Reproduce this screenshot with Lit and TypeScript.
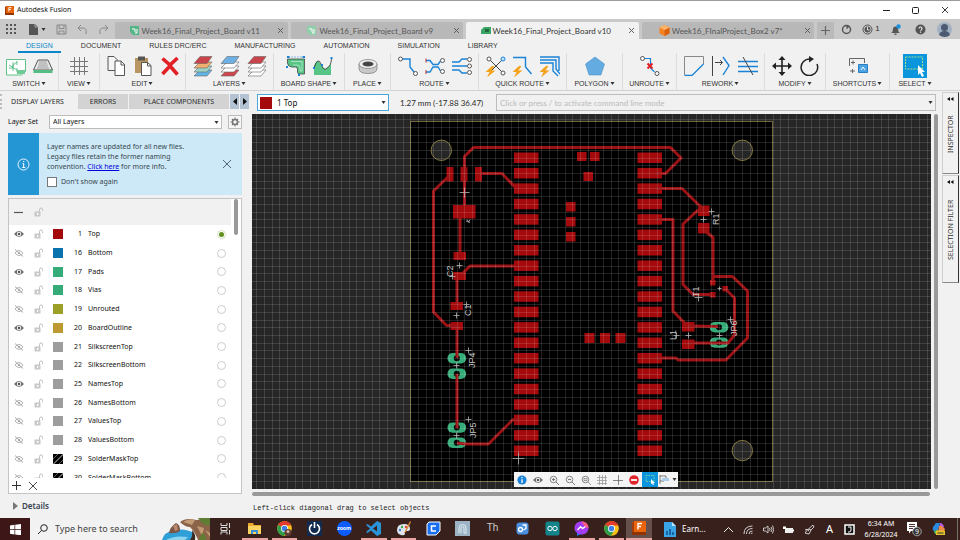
import { LitElement, html, svg, css } from "lit";
import { customElement, state } from "lit/decorators.js";
import { classMap } from "lit/directives/class-map.js";
import { styleMap } from "lit/directives/style-map.js";

/* ---------- board drawing ---------- */

type Rect = [number, number, number, number];
const VIEW = { x: 252, y: 114, w: 679, h: 375 };
const PITCH = 7.71;

const range = (n: number) => Array.from({ length: n }, (_, i) => i);
const gridLines = (origin: number, from: number, to: number) => {
  const first = Math.ceil((from - origin) / PITCH);
  const last = Math.floor((to - origin) / PITCH);
  return range(last - first + 1).map((i) => Math.floor(origin + (first + i) * PITCH) + 0.5);
};

const headerPads: Rect[] = range(20).flatMap((i) => [
  [514, 152.5 + i * 15.42, 24.5, 10.5] as Rect,
  [637.5, 152.5 + i * 15.42, 24.5, 10.5] as Rect,
]);

const smdPads: Rect[] = [
  [446.5, 167, 7, 14.5], [460.5, 167, 7, 14.5], [475, 167, 7, 14.5],
  [453, 205, 22.5, 13.5],
  [453.5, 252, 12.5, 8], [453.5, 272, 12.5, 8],
  [450.5, 302, 12.5, 8], [450.5, 322, 12.5, 8],
  [577, 152, 9.5, 9], [590, 152, 9.5, 9], [583.5, 172, 9.5, 9],
  [566, 202, 9.5, 9.5], [566, 217, 9.5, 9.5], [566, 232, 9.5, 9.5],
  [584.5, 333, 10, 10], [600, 333, 10, 10], [615.5, 333, 10, 10],
  [698, 205.5, 11.5, 10.5], [698, 223, 11.5, 10.5],
  [710, 280, 5.5, 5.5], [710, 292, 5.5, 5.5], [722.5, 286, 5.5, 5.5],
  [682, 322, 12.5, 9.5], [682, 339.5, 12.5, 9.5],
];

const throughPads: [number, number][] = [
  [456.8, 358.2], [456.8, 373.8], [456.8, 427.6], [456.8, 442.8],
  [719, 327.2], [719, 342.6],
];

const traces = [
  "464.5,206 464.5,156.5 473.5,147.5 670.5,147.5 681,158 665.5,173.5 655,173.5",
  "450,175 433.5,191 433.5,312 446.5,325.5 456,325.5",
  "479,173.5 502,173.5 515,187",
  "460,216 460,254",
  "461,275 470,266 516,266",
  "457,278 457,304",
  "457,327 457,358",
  "457,374 457,428",
  "457,443 466,444 488.5,444 513,419.5 520,419.5",
  "655,188.5 682,188.5 703,209",
  "703,209 697,211 683,224 683,284.5 693,294.5 712,294.5",
  "704,230 713,237.5 713,282",
  "713,276.5 732.5,276.5 747.5,291 747.5,338 726,360 678,360 676,358 655,358",
  "725,288.5 734.5,298 734.5,335 728,343 688,343",
  "655,219.5 673,219.5 673,311 687,325.5",
  "688,326 718,326.5",
];

const names: [string, number, number][] = [
  ["C2", 453, 277], ["C1", 471, 316], ["JP4", 475, 368], ["JP5", 476, 438],
  ["R1", 719, 225], ["T1", 699, 297], ["L1", 676, 340], ["JP6", 737, 336],
];

const crosses: [number, number, number][] = [
  [464.5, 192.5, 5], [459.5, 265.5, 3], [452.5, 276.5, 3], [456.5, 315.5, 3],
  [466.5, 304.5, 3], [456.5, 365.5, 3], [468.5, 350.5, 3], [456.5, 435.5, 3],
  [468.5, 419.5, 3], [518.5, 458.5, 6], [711.5, 211.5, 3], [703.5, 219.5, 3],
  [719.5, 288.5, 2], [698.5, 297.5, 4], [676.5, 335.5, 3], [688.5, 335.5, 3],
  [719.5, 335.5, 3], [730.5, 319.5, 3],
];

@customElement("pcb-canvas")
export class PcbCanvas extends LitElement {
  static styles = css`
    :host { display: block; min-width: 0; min-height: 0; background: #262626; overflow: hidden; }
    svg { display: block; width: 100%; height: 100%; }
    .board { fill: #000; stroke: #6e6334; }
    .hole { fill: #262626; stroke: #83763a; }
    .copper { fill: #a40a0c; }
    .trace { fill: none; stroke: #9c1214; stroke-width: 3; stroke-linejoin: round; }
    .pad { fill: #34ab78; }
    .drill { fill: #000; }
    .grid { stroke: #fff; stroke-opacity: 0.13; fill: none; }
    .cross { stroke: #b5b5b5; fill: none; stroke-width: 0.8; }
    .name { fill: #c8c8c8; font: 9px "Liberation Sans", sans-serif; }
  `;

  render() {
    const xs = gridLines(788.6, VIEW.x, VIEW.x + VIEW.w);
    const ys = gridLines(119.6, VIEW.y, VIEW.y + VIEW.h);
    const grid =
      xs.map((x) => `M${x} ${VIEW.y}V${VIEW.y + VIEW.h}`).join("") +
      ys.map((y) => `M${VIEW.x} ${y}H${VIEW.x + VIEW.w}`).join("");
    return html`<svg viewBox="${VIEW.x} ${VIEW.y} ${VIEW.w} ${VIEW.h}"
      preserveAspectRatio="xMidYMid slice" role="img" aria-label="Board layout">
      <rect class="board" x="410.5" y="121.5" width="362" height="360"></rect>
      ${[[441.3, 150.3], [742.3, 150.3], [742.3, 450.6]].map(
        ([x, y]) => svg`<circle class="hole" cx=${x} cy=${y} r="10.2"/>`)}
      ${headerPads.concat(smdPads).map(
        ([x, y, w, h]) => svg`<rect class="copper" x=${x} y=${y} width=${w} height=${h}/>`)}
      ${throughPads.map(([x, y]) => svg`<rect class="pad" x=${x - 9.3} y=${y - 5.2} width="18.6" height="10.4" rx="5"/>
        <circle class="drill" cx=${x} cy=${y} r="3"/>`)}
      ${traces.map((p) => svg`<polyline class="trace" points=${p}/>`)}
      <path class="grid" d=${grid}></path>
      ${crosses.map(([x, y, r]) => svg`<path class="cross" d="M${x - r} ${y}h${2 * r}M${x} ${y - r}v${2 * r}"/>`)}
      <path class="cross" d="M466 221l4 1.500M467 219.500l2 3M470 219.500l-1 2"></path>
      ${names.map(([t, x, y]) => svg`<text class="name" transform="translate(${x} ${y}) rotate(-90)">${t}</text>`)}
    </svg>`;
  }
}

/* ---------- icons ---------- */

const ic = (body: unknown, w = 20, h = w) =>
  html`<svg width=${w} height=${h} viewBox="0 0 ${w} ${h}" fill="none" aria-hidden="true">${body}</svg>`;

const caret = ic(svg`<path d="M.5 1h4l-2 3z" fill="#333"/>`, 5);
const cross = (s: number, c: string) => ic(svg`<path d="M1 1L${s - 1} ${s - 1}M${s - 1} 1L1 ${s - 1}" stroke=${c} stroke-width="0.9"/>`, s);
const sheets = (top: string, mid: string, low: string, lowest: string) =>
  ic(svg`<g stroke="#666" stroke-width=".6">
    <path d="M1 20l6-6h12l-5 6z" fill=${lowest}/><path d="M1 16l6-6h12l-5 6z" fill=${low}/>
    <path d="M1 12l6-6h12l-5 6z" fill=${mid}/><path d="M1 7.500l6-7h12l-5 7z" fill=${top}/></g>`, 20, 21);
const bolt = svg`<path d="M6 10L-.5 16H3.500L1 21.500 9.500 14.500H5.500L8.500 10z" fill="#f5a21c"/>`;

const I = {
  schematic: ic(svg`<path d="M.5 3.500h19v12l-4 3.500H.5z" fill="#fff" stroke="#5fc389"/><path d="M3 12h4V6m0 9V9l4-3M3 9l8 5M11 5v4m0 3v4" stroke="#3fb573" stroke-width=".8"/><path d="M11 14h8v4h-8z" fill="#6fca95"/>`),
  board3d: ic(svg`<path d="M5 4h10l4.500 10H.5z" fill="#e8e8e8" stroke="#555"/><path d="M.5 14h19v3H.5z" fill="#55bd83"/><path d="M4 12h12M5 10h10M5.500 8h9M6 6h8" stroke="#999"/>`),
  grid: ic(svg`<path d="M5.500 1v18M10.500 1v18M15.500 1v18M1 5.500h18M1 10.500h18M1 15.500h18" stroke="#777"/>`),
  copy: ic(svg`<path d="M2 .5h6l3 3v11H2z" fill="#f5f5f5" stroke="#555"/><path d="M9 5h6l3.500 3.500V19.500H9z" fill="#fff" stroke="#555"/><path d="M15 5v4h4" stroke="#555"/>`),
  paste: ic(svg`<path d="M2 2h13v15H2z" fill="#b99562"/><path d="M5 .5h7v4H5z" fill="#555"/><path d="M8.500 6.500h6l3.500 3v10H8.500z" fill="#fff" stroke="#555"/><path d="M14.500 6.500v3.500H18" stroke="#555"/>`),
  del: ic(svg`<path d="M2.500 2.500L10 9l7.500-7M2.500 18L10 10l7.500 8.500" stroke="#e32026" stroke-width="3.600"/>`),
  layersA: sheets("#c9434a", "#f0b070", "#9bd4c8", "#63b4e6"),
  layersB: sheets("#6cb0e4", "#fff", "#fff", "#d0474d"),
  layersC: sheets("#c9434a", "#fff", "#fff", "#fff"),
  shapeA: ic(svg`<path d="M1.500 3h17v15H13.500q-2 0-2-2v-3q0-2-2-2h-4q-4-1-4-4z" fill="#58c587" stroke="#333" stroke-width=".7"/><path d="M5 5.500h11V15h-2v-3q0-3-3-3H7" stroke="#a9e2c0"/><path d="M2.500 1h15" stroke="#1a83d8" stroke-dasharray="1 2"/><path d="M1 0h2.500v2H1zM16.500 0H19v2h-2.500zM0 10h2v2H0zM12 18h2v2h-2z" fill="#1a83d8"/>`),
  shapeB: ic(svg`<path d="M1 19V10q3-8 6-3t5 6q4-1 6-6v12z" fill="#58c587"/><path d="M1 12Q5 0 8 8t6 4q4-2 4.500-9" stroke="#333" stroke-width=".8"/><path d="M17.500 1h2v2h-2zM0 11h2v2H0zM8 8h2v2H8z" fill="#1a83d8"/>`),
  place: ic(svg`<path d="M1 8v4.500q0 5 9 5t9-5V8z" fill="#c9c9c9" stroke="#777" stroke-width=".7"/><ellipse cx="10" cy="8" rx="9" ry="4.500" fill="#eee" stroke="#777" stroke-width=".7"/><ellipse cx="10" cy="8" rx="5.500" ry="2.500" fill="#444"/>`),
  route: ic(svg`<path d="M4 3h8v8l4 5" stroke="#1a83d8" stroke-width="1.400"/><circle cx="2.500" cy="3" r="2" fill="#fff" stroke="#555"/><circle cx="17.500" cy="17.500" r="2" fill="#fff" stroke="#555"/>`),
  routeMulti: ic(svg`<path d="M1 4.500h4l3 4h5l2.500-3.500M1 16h4l3-5h5l2.500 4" stroke="#1a83d8" stroke-width="1.400"/><path d="M1 2.500v4M1 14v4" stroke="#b33"/><circle cx="17.500" cy="4.500" r="2" fill="#fff" stroke="#555"/><circle cx="17.500" cy="15.500" r="2" fill="#fff" stroke="#555"/>`),
  routeBus: ic(svg`<path d="M0 6h7l3-3h5M0 10h15M0 14h7l3 3h5" stroke="#1a83d8" stroke-width="1.400"/><circle cx="17.500" cy="3.500" r="2" fill="#fff" stroke="#555"/><circle cx="17.500" cy="10" r="2" fill="#fff" stroke="#555"/><circle cx="17.500" cy="16.500" r="2" fill="#fff" stroke="#555"/>`),
  quickA: ic(svg`<path d="M4 4l12 12M4 16L16 4" stroke="#444"/><circle cx="3" cy="3" r="2" fill="#fff" stroke="#555"/><circle cx="17" cy="3" r="2" fill="#bfe0f8" stroke="#1a83d8"/><circle cx="17" cy="17" r="2" fill="#fff" stroke="#555"/>${bolt}`, 20, 21),
  quickB: ic(svg`<path d="M0 1.500h12.500V11l6 7" stroke="#1a83d8" stroke-width="1.400"/>${bolt}`, 20, 21),
  quickC: ic(svg`<path d="M0 1h19v14M0 4h16v9l4 5M0 7h13v8l5 5" stroke="#1a83d8" stroke-width="1.400"/>${bolt}`, 20, 21),
  polygon: ic(svg`<path d="M10 1l9.500 7-3.600 11H4.100L.5 8z" fill="#64abe2" stroke="#4a90c8" stroke-width=".6"/>`),
  unroute: ic(svg`<path d="M4 2.500h6.500V12l4 4" stroke="#1a83d8" stroke-width="1.200"/><circle cx="2.500" cy="2.500" r="2" fill="#fff" stroke="#555"/><circle cx="17" cy="17.500" r="2" fill="#fff" stroke="#555"/><path d="M7.500 7.500l5 5m0-5l-5 5" stroke="#e32026" stroke-width="2"/>`),
  reworkA: ic(svg`<path d="M.5 19V.5h19V8" stroke="#888"/><path d="M.5 19.500H8L19.500 8" stroke="#1a83d8" stroke-width="1.300"/>`),
  reworkB: ic(svg`<path d="M1.500 0v20M4 6.500h7.500M9 4l2.500 2.500L9 9" stroke="#444"/><path d="M12 1l6 8.500L12 19" stroke="#1a83d8" stroke-width="1.400"/>`),
  reworkC: ic(svg`<path d="M0 5.500h20M0 10.500h20M0 15.500h20" stroke="#1a83d8" stroke-width="1.400"/><path d="M5 1l10 18" stroke="#444"/>`),
  move: ic(svg`<path d="M10 2v16M2 10h16" stroke="#222" stroke-width="1.600"/><path d="M10 0l3.500 4h-7zM10 20l3.500-4h-7zM0 10l4-3.500v7zM20 10l-4-3.500v7z" fill="#222"/>`),
  rotate: ic(svg`<path d="M18 8a8.300 8.300 0 1 1-7-5" stroke="#222" stroke-width="1.500"/><path d="M10 0l5 3-5 3.500z" fill="#222"/>`),
  shortcuts: ic(svg`<path d="M1.500 10V2.500h15V7M3 6.500h4M5 4.500v4M2 15h5M4.500 13v4" stroke="#666"/><path d="M10.500 8.500h9v8h-9z" fill="#4aa3e4" stroke="#2b7fc0"/><path d="M13 14l2-3 2 3" stroke="#fff"/>`),
  select: ic(svg`<path d="M0 0h24v24H0z" fill="#0b95dc"/><path d="M2.500 3h17v12h-17z" stroke="#9fe08a" stroke-dasharray="2 1"/><path d="M15 11l7 7h-3l2 4-2 1-2-4-2 2z" fill="#fff"/>`, 24),
};

const eye = ic(svg`<path d="M0 5q5-6 10 0-5 6-10 0z" fill="#6e6e6e"/><circle cx="5" cy="5" r="2.200" fill="#fff"/><circle cx="5" cy="5" r="1.300" fill="#555"/>`, 10);
const eyeOff = ic(svg`<path d="M1 5q4-5 8 0-4 5-8 0z" stroke="#b5b5b5"/><circle cx="5" cy="5" r="1.200" fill="#b5b5b5"/><path d="M1 1.500l8 7" stroke="#a5a5a5"/>`, 10);
const lock = ic(svg`<path d="M.5 4.500h6v5h-6z" fill="#c9c9c9"/><path d="M5.500 5V2.500q0-1.500 1.500-1.500t1.500 1.500V4" stroke="#c0c0c0"/><path d="M3 6h1.300v2H3z" fill="#fff"/>`, 10);
const pcbIcon = (c: string) => ic(svg`<path d="M1 1h9v9H4L1 7z" fill=${c}/><path d="M3 4h3v3M6 8h2V4" stroke="#fff"/>`, 11);
const boxIcon = ic(svg`<path d="M5.500 0l5 2.500v6l-5 2.500-5-2.500v-6z" fill="#f58220"/><path d="M5.500 5l5-2.500v6l-5 2.500z" fill="#d9610d"/><path d="M.5 2.500L5.500 0l5 2.500-5 2.500z" fill="#fbb26a"/>`, 11);
const chrome = ic(svg`<circle cx="7.500" cy="7.500" r="7.300" fill="#fbc116"/><path d="M7.500 7.500L1.200 3.900A7.300 7.300 0 0 1 14 4.200H7.500z" fill="#e23b2e"/><path d="M1.200 3.900A7.300 7.300 0 0 0 7 14.800l3.500-5.600-3-1.700z" fill="#2d9f4c"/><path d="M7.500 .2a7.300 7.300 0 0 1 6.500 4H7.500z" fill="#e23b2e"/><circle cx="7.500" cy="7.500" r="3.500" fill="#fff"/><circle cx="7.500" cy="7.500" r="2.700" fill="#3f7fe8"/>`, 15);

const fusion = (s: number) => html`<svg width=${s} height=${s} viewBox="0 0 14 14" aria-hidden="true"><path d="M2 0h12v14H0V2z" fill="#e8650d"/><path d="M0 2l2-2v11L0 13z" fill="#a33c06"/><path d="M0 11h14v3H0z" fill="#8f3305"/><path d="M6 8.500V2.500h4M6 5.500h3" stroke="#fff" stroke-width="1.400" fill="none"/></svg>`;

/* ---------- data ---------- */

const MENUS = ["DESIGN", "DOCUMENT", "RULES DRC/ERC", "MANUFACTURING", "AUTOMATION", "SIMULATION", "LIBRARY"];

const GROUPS: [string, unknown[]][] = [
  ["SWITCH", [I.schematic, I.board3d]],
  ["VIEW", [I.grid]],
  ["EDIT", [I.copy, I.paste, I.del]],
  ["LAYERS", [I.layersA, I.layersB, I.layersC]],
  ["BOARD SHAPE", [I.shapeA, I.shapeB]],
  ["PLACE", [I.place]],
  ["ROUTE", [I.route, I.routeMulti, I.routeBus]],
  ["QUICK ROUTE", [I.quickA, I.quickB, I.quickC]],
  ["POLYGON", [I.polygon]],
  ["UNROUTE", [I.unroute]],
  ["REWORK", [I.reworkA, I.reworkB, I.reworkC]],
  ["MODIFY", [I.move, I.rotate]],
  ["SHORTCUTS", [I.shortcuts]],
  ["SELECT", [I.select]],
];

const FILES: [string, unknown, boolean][] = [
  ["Week16_Final_Project_Board v11", pcbIcon("#55b586"), false],
  ["Week16_Final_Project_Board v9", pcbIcon("#8fcfa9"), false],
  ["Week16_Final_Project_Board v10", ic(svg`<path d="M4 2h7v7H1V5z" fill="#3aa565"/><path d="M5 4h4v3H5z" fill="#1f6b3d"/>`, 11), true],
  ["Week16_FInalProject_Box2 v7*", boxIcon, false],
];

interface Layer { n: number; name: string; color: string; on?: boolean; hatch?: boolean; }
const LAYERS: Layer[] = [
  { n: 1, name: "Top", color: "#a40a0c", on: true },
  { n: 16, name: "Bottom", color: "#0a72ad" },
  { n: 17, name: "Pads", color: "#34ab78", on: true },
  { n: 18, name: "Vias", color: "#34ab78" },
  { n: 19, name: "Unrouted", color: "#9c9f28" },
  { n: 20, name: "BoardOutline", color: "#bd9a32", on: true },
  { n: 21, name: "SilkscreenTop", color: "#9d9d9d" },
  { n: 22, name: "SilkscreenBottom", color: "#9d9d9d" },
  { n: 25, name: "NamesTop", color: "#9d9d9d", on: true },
  { n: 26, name: "NamesBottom", color: "#9d9d9d" },
  { n: 27, name: "ValuesTop", color: "#9d9d9d" },
  { n: 28, name: "ValuesBottom", color: "#9d9d9d" },
  { n: 29, name: "SolderMaskTop", color: "#000", hatch: true },
  { n: 30, name: "SolderMaskBottom", color: "#000", hatch: true },
];

const TASKS: [string, unknown, boolean][] = [
  ["File Explorer", ic(svg`<path d="M1 2h5l1 2h7v9H1z" fill="#e9a92c"/><path d="M1 5h13v8H1z" fill="#fcd462"/><path d="M4 9h7v4H9v-2H6v2H4z" fill="#3b8fd6"/>`, 15), true],
  ["Chrome profile", ic(svg`${chrome}<circle cx="11" cy="11.500" r="3.500" fill="#5b3a34"/><circle cx="11" cy="10.500" r="1.500" fill="#d9b8a4"/>`, 15), true],
  ["G Hub", ic(svg`<path d="M0 0h15v15H0z" fill="#132a4f"/><path d="M10 3.500a5 5 0 1 1-5 0M7.500 1v6" stroke="#fff" stroke-width="1.600"/>`, 15), false],
  ["Zoom", html`<span class="zoom">zoom</span>`, false],
  ["VS Code", ic(svg`<path d="M11 0l4 2v11l-4 2-6-5.500L1.500 12 0 11l4-3.500L0 4l1.500-1L5 5.500zM11 4.500L7 7.500l4 3z" fill="#2a93d8" fill-rule="evenodd"/>`, 15), true],
  ["Paint", ic(svg`<path d="M1 9q0-6 7-6 6 0 6 5 0 2-3 2t-2 3q-1 2-4 1-4-1-4-5z" fill="#dfe6ee"/><circle cx="4" cy="9" r="1.200" fill="#3a7fd0"/><circle cx="6" cy="6" r="1.200" fill="#4aa84a"/><circle cx="10" cy="6" r="1.200" fill="#e0463c"/><path d="M14 0L9 10l-1 2 2-1 5-10z" fill="#d98b3a"/>`, 15), true],
  ["Cura", ic(svg`<path d="M3 1h11v9l-4 4H1V3z" fill="#196ef0" stroke="#fff"/><path d="M10 5H5.500v5H10" stroke="#fff" stroke-width="1.500"/>`, 15), false],
  ["Fingerprint", ic(svg`<path d="M0 0h15v15H0z" fill="#9db4c6"/><path d="M4 12V7q0-3.500 3.500-3.500T11 7v4M6 12V7q0-1.500 1.500-1.500T9 7v5H12" stroke="#e5eef5" stroke-width=".9"/>`, 15), false],
  ["Thonny", html`<span class="th">Th</span>`, false],
  ["Roblox Studio", ic(svg`<rect x="1.500" y="1.500" width="12" height="12" rx="3" fill="#4a90e0"/><circle cx="5.500" cy="8.500" r="2" stroke="#fff" stroke-width="1.300"/><path d="M7.500 4h3.500v3.500L8.500 9" stroke="#fff" stroke-width="1.300"/>`, 15), false],
  ["Arduino", ic(svg`<rect x=".5" y=".5" width="14" height="14" rx="2" fill="#12848a"/><circle cx="5" cy="7.500" r="2.200" stroke="#fff"/><circle cx="10" cy="7.500" r="2.200" stroke="#fff"/>`, 15), false],
  ["Messenger", ic(svg`<path d="M7.500.5c4 0 7 2.700 7 6.500s-3 6.500-7 6.500l-2-.3L3 14.500v-2.700C1.400 10.600.5 9 .5 7 .5 3.200 3.500.5 7.500.5z" fill="#a23cf5"/><path d="M1 9q2 4.500 6.500 4.500L3 14.500v-2.700z" fill="#1a7cff"/><path d="M7.500.5c4 0 7 2.700 7 6.500-3 0-5-3-7-6.500z" fill="#ff5f7c"/><path d="M3.500 9l3-3.200 2 1.700 3-2" stroke="#fff" stroke-width="1.400"/>`, 15), true],
  ["Chrome", chrome, true],
  ["Autodesk Fusion", fusion(14), true],
];

const TRAY: [string, unknown][] = [
  ["Show hidden icons", ic(svg`<path d="M1 8l4.500-4.500L10 8" stroke="#eee"/>`, 11)],
  ["Network", ic(svg`<path d="M1 10Q1 2 9.500 2M3.500 10Q3.500 4.500 9.500 4.500M6 10q0-3 3.500-3M8 10q0-1 1.500-1" stroke="#ddd" stroke-width=".9"/>`, 11)],
  ["Volume", ic(svg`<path d="M.5 4h2L5 2v7L2.500 7h-2zM6.500 4q1 1.500 0 3M8 3q2 2.500 0 5M9.500 1.500q2.500 4 0 8" stroke="#eee" stroke-width=".8"/>`, 11)],
  ["Battery", ic(svg`<path d="M2 4h8v5H2z" fill="#eee"/><path d="M10 5.500h1v2h-1zM0 2.500h3V5H0z" fill="#fff"/>`, 11)],
  ["Pen", ic(svg`<path d="M1 9l3-4 3 1-2 4zM4.500 5L9 1l1 2-3 3M1 6q2-2 4 1" stroke="#ddd" stroke-width=".9"/>`, 11)],
  ["Input", html`<span class="ime">A</span>`],
  ["Japanese input", ic(svg`<path d="M1 1h9v9H1z" fill="#111" stroke="#fff" stroke-width="1.500"/><path d="M4 3h3v3q0 2-2 2H4" stroke="#fff"/>`, 11)],
];

const OVERLAY: [string, unknown][] = [
  ["Info", ic(svg`<circle cx="5" cy="5" r="4.600" fill="#1a83d8"/><path d="M5 4.200V8M5 2v1.200" stroke="#fff" stroke-width="1.300"/>`, 10)],
  ["Show", eye],
  ["Zoom in", ic(svg`<circle cx="4.500" cy="4.500" r="3.300" fill="#eee" stroke="#888"/><path d="M3 4.500h3M4.500 3v3M7 7l3 3" stroke="#777"/>`, 10)],
  ["Zoom out", ic(svg`<circle cx="4.500" cy="4.500" r="3.300" fill="#eee" stroke="#888"/><path d="M3 4.500h3M7 7l3 3" stroke="#777"/>`, 10)],
  ["Zoom fit", ic(svg`<circle cx="4.500" cy="4.500" r="3.300" fill="#eee" stroke="#888"/><path d="M3 3.500h3v2H3zM7 7l3 3" stroke="#888" stroke-width=".8"/>`, 10)],
  ["Grid", ic(svg`<path d="M2.500 0v10M5.500 0v10M8.500 0v10M0 2.500h10M0 5.500h10M0 8.500h10" stroke="#999" stroke-width=".8"/>`, 10)],
  ["Origin", ic(svg`<path d="M0 5.500h10M5.500 0v10" stroke="#555" stroke-width=".7"/>`, 10)],
  ["Stop", ic(svg`<circle cx="5" cy="5" r="4.800" fill="#e0262c"/><path d="M2 5h6" stroke="#fff" stroke-width="1.800"/>`, 10)],
];

/* ---------- application ---------- */

@customElement("app-root")
export class AppRoot extends LitElement {
  @state() private activeLayer = 1;

  static styles = css`
    :host {
      display: flex; flex-direction: column; height: 100vh; overflow: hidden;
      background: #f1f1f1; color: #2b2b2b;
      font: 7px/10px "Noto Sans", sans-serif;
    }
    * { box-sizing: border-box; }
    button, select, input { font: inherit; color: inherit; margin: 0; }
    button { display: flex; align-items: center; justify-content: center; padding: 0; border: 0; background: none; }
    svg { display: block; flex: none; }

    .titlebar { flex: none; display: flex; align-items: center; height: 19px; padding: 0 1px 0 5px; background: #fff; border-top: 1px solid #9c9c9c; color: #111; }
    .titlebar .title { flex: 1; padding-left: 3px; }
    .titlebar button { width: 29px; height: 18px; }

    .filebar { flex: none; display: flex; align-items: flex-end; height: 20px; background: #c9c9c9; }
    .quick { display: flex; width: 115px; height: 20px; align-items: center; gap: 7px; padding-left: 4px; }
    .quick .wide { gap: 2px; width: 24px; }
    .quick .tool { width: 14px; }
    .quick .wide + .tool { margin-left: -2px; }
    .files { flex: 1; display: flex; gap: 3px; min-width: 0; }
    .file { flex: 1; display: flex; align-items: center; height: 17px; background: #b8b8b8; color: #555; border-radius: 2px 2px 0 0; font: 8px/10px Lato, sans-serif; min-width: 0; }
    .file.on { background: #f1f1f1; color: #333; }
    .file .label { flex: 1; gap: 2px; height: 17px; white-space: nowrap; }
    .file .close { width: 14px; height: 17px; }
    .plus { width: 17px; height: 17px; margin: 0 1px 0 3px; background: #bababa; }
    .account { display: flex; align-items: center; height: 20px; gap: 2px; width: 125px; padding-right: 4px; font: 8px/10px "Liberation Sans", sans-serif; }
    .account button { flex: 1; gap: 2px; height: 18px; }

    .menus { flex: none; display: flex; gap: 28px; height: 14px; padding-left: 26px; font: 7px/14px "Liberation Sans", sans-serif; }
    .menus a { color: #333; text-decoration: none; white-space: nowrap; }
    .menus a.on { color: #0b86c8; box-shadow: inset 0 -2px #0b86c8; margin: 0 -8px; padding: 0 8px; }

    .ribbon {
      flex: none; display: grid; height: 38px; border-bottom: 1px solid #d2d2d2;
      grid-template-columns: 58fr 41fr 86fr 88fr 71fr 46fr 88fr 88fr 56fr 54fr 88fr 61fr 64fr 51fr 20fr;
      font: 7px/9px "Liberation Sans", sans-serif;
    }
    .group { display: flex; flex-direction: column; align-items: center; justify-content: space-between; padding: 1px 0 2px; min-width: 0; }
    .group + .group { border-left: 1px solid #dcdcdc; }
    .group:last-child { border-left: 0; }
    .icons { display: flex; align-items: center; gap: 7px; height: 24px; }
    .group .name { gap: 1px; white-space: nowrap; color: #333; }

    .main { flex: 1; display: flex; min-height: 0; }
    .panel { flex: none; width: 250px; display: flex; flex-direction: column; padding-right: 8px; }
    .tabs { flex: none; display: flex; height: 15px; margin-top: 3px; margin-right: -7px; gap: 1px; padding-left: 4px; border-left: 2px dotted #bbb; }
    .tabs button { background: #d3d3d3; }
    .tabs .t1 { background: none; width: 71px; padding-right: 8px; }
    .tabs .t2 { width: 50px; }
    .tabs .t3 { flex: 1; }
    .tabs .arrow { width: 9px; background: #b3c3d4; }

    .setrow { flex: none; display: flex; align-items: center; height: 14px; margin: 6px 0 4px 8px; }
    .setrow label { width: 41px; color: #111; }
    .dropdown { position: relative; display: flex; align-items: center; flex: 1; min-width: 0; }
    .dropdown select, .dropdown input { appearance: none; width: 100%; height: 14px; padding: 0 14px 0 3px; border: 1px solid #bcbcbc; background: #fff; border-radius: 0; color: #111; outline: none; }
    .dropdown svg { position: absolute; right: 3px; pointer-events: none; }
    .gear { width: 14px; height: 14px; margin-left: 6px; border: 1px solid #bcbcbc; background: #f6f6f6; }

    .banner { flex: none; display: flex; margin-left: 8px; height: 62px; background: #cde9f8; color: #37474f; }
    .banner .mark { width: 31px; display: flex; align-items: center; justify-content: center; background: #2496d4; }
    .banner .body { flex: 1; display: flex; flex-direction: column; justify-content: center; gap: 5px; padding-left: 8px; }
    .banner p { margin: 0; white-space: nowrap; }
    .banner a { color: #0000e0; }
    .banner label { display: flex; align-items: center; gap: 4px; }
    .banner input { appearance: none; width: 10px; height: 10px; border: 1px solid #777; background: #fff; }
    .banner .x { width: 31px; }

    .layers { flex: 1; min-height: 0; display: flex; flex-direction: column; margin: 3px 0 0 8px; border: 1px solid #c4c4c4; background: #fff; }
    .scroll { flex: 1; min-height: 0; overflow: hidden; display: flex; align-items: flex-start; }
    .sheet { flex: 1; min-width: 0; }
    .thumb { width: 4px; height: 36px; margin: 0 3px; border-radius: 2px; background: #999; flex: none; }
    .lhead { display: flex; align-items: center; gap: 10px; height: 26px; padding-left: 5px; background: #f1f1f1; }
    table { width: 100%; height: 262px; border-collapse: collapse; table-layout: fixed; color: #111; }
    td { padding: 0; vertical-align: middle; }
    td.e { width: 25px; padding-left: 5px; }
    td.l { width: 19px; }
    td.c { width: 14px; }
    td.n { width: 15px; text-align: right; }
    td.t { padding-left: 6px; }
    td.r { width: 14px; }
    .swatch { width: 10px; height: 10px; }
    .hatch { background-image: repeating-linear-gradient(135deg, transparent 0 3px, #666 3px 4px); }
    td input { appearance: none; display: block; width: 9px; height: 9px; border: 1px solid #ccc; border-radius: 5px; background: #fff; }
    td input:checked { background: #5f8f1f; border-color: #d5e2c0; background-clip: content-box; padding: 1px; }
    .ladd { display: flex; gap: 7px; height: 15px; padding-left: 3px; align-items: center; }
    .details { flex: none; justify-content: flex-start; gap: 3px; height: 18px; margin: 3px 0 3px 8px; padding-left: 4px; font-size: 8px; font-weight: 600; color: #3a4250; }

    .work { flex: 1; min-width: 0; display: flex; flex-direction: column; padding: 0 1px 0 2px; }
    .topbar { flex: none; display: flex; align-items: center; height: 23px; padding: 0 2px 0 5px; }
    .layerpick { flex: none; width: 132px; }
    .layerpick select { height: 17px; padding-left: 19px; border: 1px solid #4aa6dc; font: 8px/12px "Noto Sans", sans-serif; }
    .layerpick .chip { position: absolute; left: 3px; width: 12px; height: 12px; background: #a40a0c; }
    .coords { width: 107px; padding-left: 11px; font: 8px/10px Lato, sans-serif; }
    .cmd input { height: 17px; background: #f1f1f1; font: 8px/10px Lato, sans-serif; }
    .cmd input::placeholder { color: #b9b9b9; opacity: 1; }
    .stage { flex: 1; display: flex; min-height: 0; position: relative; }
    .stage pcb-canvas { flex: 1; }
    .vbar { width: 4px; margin: 0 0 0 3px; border-radius: 2px; background: #999; }
    .hbar { flex: none; height: 4px; margin: 3px 8px 0 0; border-radius: 2px; background: #999; }
    .status { flex: none; height: 22px; padding-left: 1px; font: 7px/25px "Liberation Mono", monospace; color: #222; }
    .overlay { position: absolute; left: 262px; bottom: 2px; display: flex; height: 15px; background: #f4f4f4; }
    .overlay button { width: 16px; height: 15px; }
    .overlay .pick { background: #0b95dc; }
    .overlay .filter { width: 20px; gap: 2px; }

    .rail { flex: none; width: 21px; padding: 1px 1px 0 3px; display: flex; flex-direction: column; gap: 1px; }
    .rail button { flex-direction: column; justify-content: flex-start; padding-top: 4px; width: 17px; border: 1px solid #d0d0d0; border-right: 1px solid #333; border-bottom-color: #888; color: #333; }
    .rail .inspector { height: 82px; }
    .rail .selection { height: 108px; }
    .rail span { flex: 1; writing-mode: vertical-rl; transform: rotate(180deg); text-align: center; padding-top: 6px; }

    .taskbar { flex: none; display: flex; height: 22px; background: #38211d; color: #fff; align-items: stretch; }
    .start { width: 30px; background: #3d1618; }
    .search { width: 180px; display: flex; align-items: center; background: #f2f2f2; padding-left: 7px; gap: 7px; }
    .search input { flex: 1; min-width: 0; border: 0; padding: 0; background: none; font-size: 9px; outline: none; }
    .search input::placeholder { color: #444; opacity: 1; }
    .view { width: 30px; }
    .apps { width: 412px; display: flex; }
    .apps button { flex: 1; margin: 0 2px; border-bottom: 2px solid transparent; }
    .apps .open { border-bottom-color: #e9a5a2; }
    .apps .current { background: #66504c; margin: 0; }
    .zoom { width: 15px; border-radius: 8px; background: #0b5cff; font: 700 5px/15px "Noto Sans", sans-serif; }
    .th { font: 10px/14px "Liberation Sans", sans-serif; color: #ccc; }
    .ime { font-size: 11px; }
    .news { width: 66px; gap: 6px; justify-content: flex-start; padding-left: 11px; font-size: 8px; }
    .tray { flex: 1; display: flex; min-width: 0; }
    .tray button { flex: 1; }
    .clock { width: 42px; flex-direction: column; font-size: 7px; line-height: 11px; }
    .notes { width: 24px; }
    .copilot { width: 26px; }
    .tip { width: 3px; margin-left: 5px; border-left: 1px solid #776; }
  `;

  private filebar() {
    return html`<div class="filebar">
      <div class="quick">
        <button class="tool" aria-label="Data panel">${ic(svg`<path d="M1 1h2v2H1zM5 1h2v2H5zM9 1h2v2H9zM1 5h2v2H1zM5 5h2v2H5zM9 5h2v2H9zM1 9h2v2H1zM5 9h2v2H5zM9 9h2v2H9z" fill="#555"/>`, 12)}</button>
        <button class="wide" aria-label="File">${ic(svg`<path d="M1 0h6l3 3v8H1z" fill="#555"/><path d="M7 0v3h3" stroke="#ccc" stroke-width=".7"/>`, 11)}${caret}</button>
        <button class="tool" aria-label="Save">${ic(svg`<path d="M1 1h9v9H1zM3 1v3.500h5V1M3 10V7h5v3" stroke="#888"/>`, 11)}</button>
        <button class="tool" aria-label="Undo">${ic(svg`<path d="M4 1L1 4l3 3M1 4h5q4 0 3 6" stroke="#888"/>`, 11)}</button>
        <button class="tool" aria-label="Redo">${ic(svg`<path d="M7 1l3 3-3 3M10 4H5q-4 0-3 6" stroke="#888"/>`, 11)}</button>
      </div>
      <div class="files">
        ${FILES.map(([name, icon, on]) => html`<div class=${classMap({ file: true, on })}>
          <button class="label">${icon}<span>${name}</span></button>
          <button class="close" aria-label="Close">${cross(7, "#555")}</button>
        </div>`)}
      </div>
      <button class="plus" aria-label="New tab">${ic(svg`<path d="M0 4.500h9M4.500 0v9" stroke="#666" stroke-width="1.200"/>`, 9)}</button>
      <div class="account">
        <button aria-label="Extensions">${ic(svg`<circle cx="5.500" cy="5.500" r="4" stroke="#555" stroke-width="1.500"/><path d="M5.500 5.500L9 2H5.500z" fill="#555"/>`, 11)}</button>
        <button aria-label="Job status">${ic(svg`<circle cx="5.500" cy="5.500" r="4.500" stroke="#555"/><circle cx="5.500" cy="5.500" r="3" fill="#555"/><path d="M5.500 3v3h2" stroke="#ddd"/>`, 11)}1</button>
        <button aria-label="Notifications">${ic(svg`<path d="M1 9q2-1 2-4 0-2.500 2.500-2.500T8 5q0 3 2 4zM4.500 9.500h2V11h-2z" fill="#555"/><circle cx="8.500" cy="2.500" r="2.200" fill="#1a8fe0"/>`, 11)}</button>
        <button aria-label="Help">${ic(svg`<circle cx="5.500" cy="5.500" r="5" fill="#555"/><path d="M4 4.500Q4 3 5.500 3T7 4.500 5.500 6.500M5.500 7.500v1.300" stroke="#eee" stroke-width="1.100"/>`, 11)}</button>
        <button aria-label="Account">${ic(svg`<circle cx="7.500" cy="7.500" r="7.500" fill="#a3b2c2"/><circle cx="7.500" cy="5.500" r="3.500" fill="#4b5a70"/><path d="M2 13q1-4 5.500-4t5.500 4q-5 4-11 0z" fill="#4b5a70"/>`, 15)}</button>
      </div>
    </div>`;
  }

  private panel() {
    return html`<aside class="panel">
      <div class="tabs">
        <button class="t1">DISPLAY LAYERS</button><button class="t2">ERRORS</button>
        <button class="t3">PLACE COMPONENTS</button>
        <button class="arrow" aria-label="Previous">${ic(svg`<path d="M5 0v7L1 3.500z" fill="#111"/>`, 6, 7)}</button>
        <button class="arrow" aria-label="Next">${ic(svg`<path d="M1 0v7l4-3.500z" fill="#111"/>`, 6, 7)}</button>
      </div>
      <div class="setrow">
        <label for="set">Layer Set</label>
        <div class="dropdown"><select id="set"><option>All Layers</option></select>${caret}</div>
        <button class="gear" aria-label="Settings">${ic(svg`<circle cx="5" cy="5" r="2.500" stroke="#777" stroke-width="1.500"/><path d="M5 .5v2M5 7.500v2M.5 5h2M7.500 5h2M2 2l1 1M7 7l1 1M8 2L7 3M3 7L2 8" stroke="#777" stroke-width="1.200"/>`, 10)}</button>
      </div>
      <div class="banner">
        <div class="mark">${ic(svg`<circle cx="6.500" cy="6.500" r="5.500" stroke="#fff" stroke-width=".9"/><path d="M5.500 5.500h1.200V9.500M5.300 9.500h3M6 3.500h1.200" stroke="#fff"/>`, 13)}</div>
        <div class="body">
          <p>Layer names are updated for all new files.<br>Legacy files retain the former naming<br>convention. <a href="#layers">Click here</a> for more info.</p>
          <label><input type="checkbox">Don't show again</label>
        </div>
        <button class="x" aria-label="Dismiss">${cross(10, "#456")}</button>
      </div>
      <div class="layers">
        <div class="scroll">
          <div class="sheet">
            <div class="lhead">${ic(svg`<path d="M0 5.500h9" stroke="#555" stroke-width="1.200"/>`, 10)}${lock}</div>
            <table><tbody>
              ${LAYERS.map((l) => html`<tr>
                <td class="e">${l.on ? eye : eyeOff}</td>
                <td class="l">${lock}</td>
                <td class="c"><div class=${classMap({ swatch: true, hatch: !!l.hatch })} style=${styleMap({ backgroundColor: l.color })}></div></td>
                <td class="n">${l.n}</td>
                <td class="t">${l.name}</td>
                <td class="r"><input type="radio" name="active" aria-label=${l.name}
                  .checked=${l.n === this.activeLayer} @change=${() => (this.activeLayer = l.n)}></td>
              </tr>`)}
            </tbody></table>
          </div>
          <div class="thumb"></div>
        </div>
        <div class="ladd">
          <button aria-label="Add layer">${ic(svg`<path d="M0 4.500h9M4.500 0v9" stroke="#333"/>`, 9)}</button>
          <button aria-label="Remove layer">${cross(10, "#333")}</button>
        </div>
      </div>
      <button class="details">${ic(svg`<path d="M1 0l5 4-5 4z" fill="#777"/>`, 7, 8)}Details</button>
    </aside>`;
  }

  private work() {
    return html`<main class="work">
      <div class="topbar">
        <div class="dropdown layerpick"><select aria-label="Layer"><option>1 Top</option></select><span class="chip"></span>${caret}</div>
        <div class="coords">1.27 mm (-17.88 36.47)</div>
        <div class="dropdown cmd"><input aria-label="Command line" placeholder="Click or press / to activate command line mode">${caret}</div>
      </div>
      <div class="stage">
        <pcb-canvas></pcb-canvas>
        <div class="vbar"></div>
        <div class="overlay">
          ${OVERLAY.map(([label, icon]) => html`<button aria-label=${label}>${icon}</button>`)}
          <button class="pick" aria-label="Select">${ic(svg`<path d="M1 1.500h8v6H1z" stroke="#8fdc9a" stroke-dasharray="1.500 1" stroke-width=".8"/><path d="M6 5l4 4H8.500l.5 1.500-1 .5-.8-1.600L6 10z" fill="#fff"/>`, 11)}</button>
          <button class="filter" aria-label="Filter">${ic(svg`<path d="M1 1v9M1 2h6v2M1 7h4" stroke="#777"/><path d="M3 4h7v3H3z" fill="#a9cdea"/>`, 11)}${caret}</button>
        </div>
      </div>
      <div class="hbar"></div>
      <div class="status">Left-click diagonal drag to select objects</div>
    </main>`;
  }

  private taskbar() {
    return html`<footer class="taskbar">
      <button class="start" aria-label="Start">${ic(svg`<path d="M0 1.500l4.500-.7v4.500H0zM5.200.7L11 0v5.300H5.200zM0 6h4.500v4.500L0 9.800zM5.200 6H11v5.300l-5.800-.8z" fill="#fff"/>`, 11)}</button>
      <div class="search">
        ${ic(svg`<circle cx="7" cy="4" r="3.300" stroke="#222"/><path d="M4.500 6.500L1 10" stroke="#222"/>`, 11)}
        <input aria-label="Search" placeholder="Type here to search">
        ${ic(svg`<path d="M0 22q2-8 12-10 12-2 20 3l-2 7z" fill="#2f9fd8"/><path d="M4 22q8-5 22-3l-3 3z" fill="#8fd4ee"/><path d="M7 15q1-6 7-10 4 1 4 8-4 3-11 2z" fill="#7d5545"/><path d="M11 8l4-2 1 6-3 1z" fill="#b98a70"/><path d="M18 4q6-5 16-2l14-1v21H36q-3-8-8-13-5 0-10-5z" fill="#8a6348"/><path d="M21 4q6-4 12-2l-3 5zM35 8l7 2-2 8zM43 12l5 3v4z" fill="#c49a74"/><path d="M36 0h12v7q-6 2-12-7zM40 15q4 1 4 7h-7z" fill="#5f7d33"/><path d="M30 12q4 4 3 10h-5q3-4 2-10z" fill="#3c2b22"/>`, 48, 22)}
      </div>
      <button class="view" aria-label="Task view">${ic(svg`<path d="M1 0v2.500h6V0M1 4.500h6v3H1zM1 11.500V9h6v2.500M9.500 0v5M9.500 7v4.500" stroke="#ddd"/>`, 11, 12)}</button>
      <div class="apps">
        ${TASKS.map(([label, icon, open]) => html`<button class=${classMap({ open, current: label === "Autodesk Fusion" })} aria-label=${label}>${icon}</button>`)}
      </div>
      <button class="news">${ic(svg`<path d="M1 0h8l4 4v11H1z" fill="#39a5e6"/><path d="M9 0l4 4H9z" fill="#bfe3fa"/><path d="M4 13V9M7 13V7M10 13v-3" stroke="#0d4f8b" stroke-width="1.500"/>`, 13, 15)}Earn...</button>
      <div class="tray">${TRAY.map(([label, icon]) => html`<button aria-label=${label}>${icon}</button>`)}</div>
      <button class="clock"><span>6:34 AM</span><span>6/28/2024</span></button>
      <button class="notes" aria-label="Notifications">${ic(svg`<path d="M1 1h10v9H5l-2 2.500V10H1z" fill="#fff"/><path d="M3 3.500h6M3 5.500h6M3 7.500h4" stroke="#533"/><circle cx="11" cy="10.500" r="4.300" fill="#333" stroke="#bbb" stroke-width=".8"/><text x="11" y="13" text-anchor="middle" font-size="7" fill="#fff">9</text>`, 16)}</button>
      <button class="copilot" aria-label="Copilot">${ic(svg`<path d="M4 1h4L6 8 2 9Q0 8 1 5z" fill="#2a8ae0"/><path d="M8 1q3 0 4 4l-5 3z" fill="#b45be0"/><path d="M2 9l4-1-1 4H3z" fill="#58c75b"/><path d="M7 4h3l3 3-2 4H6z" fill="#f08a4b"/><path d="M4 8.500h9V13H4z" fill="#e8c22a"/><path d="M5.500 11h6" stroke="#333"/>`, 14)}</button>
      <div class="tip"></div>
    </footer>`;
  }

  render() {
    const back = ic(svg`<path d="M3 0v4L0 2zM6.500 0v4l-3-2z" fill="#111"/>`, 7, 4);
    return html`
      <header class="titlebar">
        ${fusion(9)}<span class="title">Autodesk Fusion</span>
        <button aria-label="Minimize">${ic(svg`<path d="M0 3.500h7" stroke="#222"/>`, 7)}</button>
        <button aria-label="Maximize">${ic(svg`<rect x=".5" y=".5" width="6" height="6" rx="1" stroke="#222"/>`, 7)}</button>
        <button aria-label="Close">${cross(8, "#222")}</button>
      </header>
      ${this.filebar()}
      <nav class="menus">${MENUS.map((m, i) => html`<a href="#${m}" class=${classMap({ on: i === 0 })}>${m}</a>`)}</nav>
      <div class="ribbon">
        ${GROUPS.map(([name, icons]) => html`<div class="group">
          <div class="icons">${icons.map((icon) => html`<button aria-label=${name}>${icon}</button>`)}</div>
          <button class="name">${name}${caret}</button>
        </div>`)}
        <div class="group"></div>
      </div>
      <div class="main">
        ${this.panel()} ${this.work()}
        <div class="rail">
          <button class="inspector">${back}<span>INSPECTOR</span></button>
          <button class="selection">${back}<span>SELECTION FILTER</span></button>
        </div>
      </div>
      ${this.taskbar()}
    `;
  }
}
